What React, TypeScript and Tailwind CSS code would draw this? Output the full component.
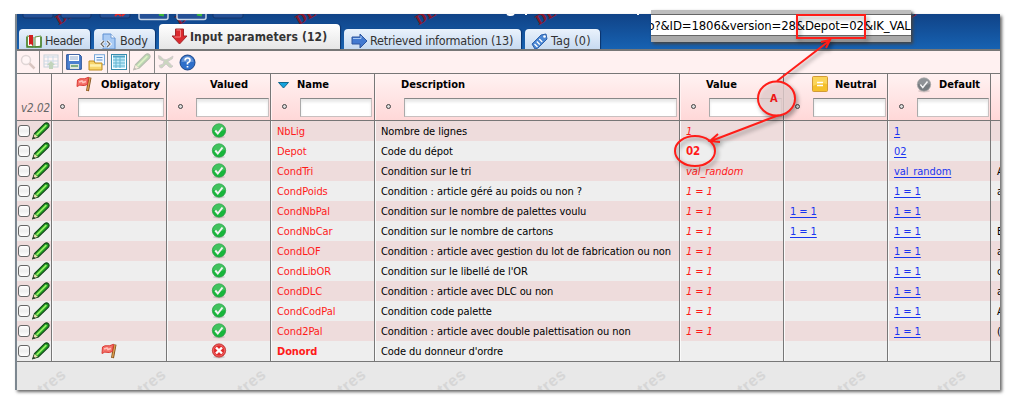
import React from "react";

type Row = { name: string; desc: string; value: string; neutral?: string; def?: string; extra?: string; bold?: boolean };

const rows: Row[] = [
  { name: "NbLig", desc: "Nombre de lignes", value: "1", def: "1" },
  { name: "Depot", desc: "Code du dépot", value: "02", def: "02" },
  { name: "CondTri", desc: "Condition sur le tri", value: "val_random", def: "val_random", extra: "A" },
  { name: "CondPoids", desc: "Condition : article géré au poids ou non ?", value: "1 = 1", def: "1 = 1", extra: "a" },
  { name: "CondNbPal", desc: "Condition sur le nombre de palettes voulu", value: "1 = 1", neutral: "1 = 1", def: "1 = 1" },
  { name: "CondNbCar", desc: "Condition sur le nombre de cartons", value: "1 = 1", neutral: "1 = 1", def: "1 = 1", extra: "E" },
  { name: "CondLOF", desc: "Condition : article avec gestion du lot de fabrication ou non", value: "1 = 1", def: "1 = 1", extra: "a" },
  { name: "CondLibOR", desc: "Condition sur le libellé de l'OR", value: "1 = 1", def: "1 = 1", extra: "c" },
  { name: "CondDLC", desc: "Condition : article avec DLC ou non", value: "1 = 1", def: "1 = 1", extra: "a" },
  { name: "CondCodPal", desc: "Condition code palette", value: "1 = 1", def: "1 = 1", extra: "A" },
  { name: "Cond2Pal", desc: "Condition : article avec double palettisation ou non", value: "1 = 1", def: "1 = 1", extra: "(" },
  { name: "Donord", desc: "Code du donneur d'ordre", value: "", bold: true },
];

const grid = "grid grid-cols-[35px_115px_104px_104px_305px_104px_104px_103px_9px]";
const cell = "border-r border-[#777] shadow-[inset_1px_0_0_#fafafa] flex items-center overflow-hidden whitespace-nowrap";
const textCell = cell + " pl-[6px] pt-[2px] tracking-[-0.075px]";

function Check({ gray }: { gray?: boolean }) {
  return (
    <svg width="16" height="16" viewBox="0 0 16 16" className="shrink-0">
      <ellipse cx="8" cy="14" rx="6" ry="1.5" fill="#0002" />
      <circle cx="8" cy="7.5" r="6.7" fill={gray ? "#777c80" : "#18b63b"} stroke={gray ? "#aaa" : "#2d9b45"} strokeWidth=".7" />
      <path d="M2 7a6 6 0 0 1 12 0q-6 2-12 0" fill="#fff" opacity=".18" />
      <path d="M4.300 7.500l2.500 3L11.500 4.500" fill="none" stroke="#f4f4f4" strokeWidth={gray ? "1.500" : "2"} />
    </svg>
  );
}

function Cross() {
  return (
    <svg width="16" height="16" viewBox="0 0 16 16" className="shrink-0">
      <ellipse cx="8" cy="14" rx="6" ry="1.5" fill="#0002" />
      <circle cx="8" cy="7.5" r="6.7" fill="#e02b2b" stroke="#b33" strokeWidth=".7" />
      <circle cx="8" cy="7.5" r="5.6" fill="none" stroke="#f59090" strokeWidth=".6" />
      <path d="M5 4.5l6 6M11 4.5l-6 6" stroke="#fff" strokeWidth="2.4" />
    </svg>
  );
}

function Flag() {
  return (
    <svg width="16" height="16" viewBox="0 0 16 16" className="shrink-0">
      <path d="M14 1.500l-2.500 13.500" stroke="#7b4a17" strokeWidth="3" />
      <path d="M14 2l-2.500 12.500" stroke="#dc9d50" strokeWidth="1.4" />
      <path d="M1.500 4Q4 2.200 6 2.800T12.500 1.300L11.300 8.500Q8 10.200 6 9.300T1 10.500z" fill="#f4716a" stroke="#dc3a33" />
      <path d="M3 6l3-1 1 1.500 3-1" stroke="#ffc2bb" strokeWidth="1.600" fill="none" />
    </svg>
  );
}

function Pencil({ faded }: { faded?: boolean }) {
  return (
    <svg width="18" height="18" viewBox="0 0 18 18" className={faded ? "shrink-0 opacity-30" : "shrink-0"}>
      <path d="M.700 16.800L2.500 11.500 12.500 1.700q2.200-1.700 3.800 0t0 3.600L6.300 15z" fill="#1e9d22" stroke="#15461a" strokeWidth="1.100" />
      <path d="M4.600 12.800L14.400 3.200" stroke="#9af066" strokeWidth="1.800" />
      <path d="M1 16.500l1.700-4.500 3.100 2.800z" fill="#e8dcae" />
      <path d="M.700 16.800l.900-2.400 1.600 1.500z" fill="#222" />
    </svg>
  );
}

function Head({ label, icon, textPad, bullet, input }: { label: string; icon?: React.ReactNode; textPad: string; bullet: string; input: string }) {
  return (
    <div className="flex h-[46px] flex-col overflow-hidden border-r border-[#777] shadow-[inset_1px_0_0_#fff2f2]">
      <div className={"flex h-6 items-start whitespace-nowrap pt-[2px] font-bold " + textPad}>
        {icon}
        <span className="leading-[18px]">{label}</span>
      </div>
      <div className={"flex items-start " + bullet}>
        <span className="mt-[6px] h-[5px] w-[5px] shrink-0 rounded-full border-[1.500px] border-[#444] bg-[#ddd]" />
        <span className={"ml-[13px] h-[19px] border border-[#c9c0c0] border-t-[#888] border-l-[#aaa] bg-white shadow-[inset_0_3px_3px_#e8e8e8] " + input} />
      </div>
    </div>
  );
}

function Tab({ children, active, size }: { children: React.ReactNode; active?: boolean; size: string }) {
  return (
    <div className={"mr-1 flex items-center whitespace-nowrap rounded-t-[4px] text-[#333] shadow-[1px_0_1px_#0b326a] " + size + (active ? " h-[25px] bg-linear-to-b from-white to-[#e6e6e6] text-[12px] font-bold tracking-[0.1px]" : " h-5 bg-linear-to-b from-[#eaf2fc] to-[#c7daf0] pt-[4px] text-[12.5px]")}>
      {children}
    </div>
  );
}

const stamps = ["left-[43px]", "left-[163px]", "left-[283px]", "left-[403px]", "left-[523px]", "left-[883px]"];
const watermarks = ["left-[19px]", "left-[119px]", "left-[219px]", "left-[319px]", "left-[419px]", "left-[519px]", "left-[619px]", "left-[719px]", "left-[819px]", "left-[919px]"];

export default function App() {
  return (
    <div className="relative h-[413px] w-[1013px] overflow-hidden bg-white pl-[15px] pt-[14px] font-['DejaVu_Sans_Condensed','DejaVu_Sans',sans-serif] text-[11px] text-black">
      <div className="flex h-[376px] w-[985px] flex-col border-l-2 border-[#7c8790] bg-[#e8e8e8] shadow-[2px_2px_3px_#666]">
        <div className="relative h-[35px] shrink-0 overflow-hidden bg-linear-to-b from-[#104387] to-[#1762b2]">
          {stamps.map((s) => (
            <span key={s} className={"absolute -top-px origin-bottom-left -rotate-[30deg] font-['DejaVu_Serif',serif] text-[13px] font-bold leading-[15px] text-[#85182c] " + s}>DEMO</span>
          ))}
          <svg className="absolute left-0 top-0" width="640" height="8" viewBox="0 0 640 8">
            <g fill="#255196" stroke="#15356a">
              <rect x="6" y="-8" width="30" height="12" rx="2" /><rect x="44" y="-8" width="30" height="12" rx="2" /><rect x="83" y="-8" width="30" height="12" rx="2" />
              <rect x="196" y="-8" width="30" height="12" rx="2" />
            </g>
            <g fill="#255196" stroke="#c8d5e6" strokeWidth="1.500"><rect x="122" y="-8" width="29" height="13.500" rx="2" /><rect x="160" y="-8" width="29" height="13.500" rx="2" /></g>
            <path d="M98 2l3-3 3 3m1 0l3-3" stroke="#e02828" strokeWidth="2" fill="none" /><path d="M142 0l5 1M180 0l5 1" stroke="#3cb83d" strokeWidth="3" />
            <path d="M490 0q4 2 7 0M509 0v1M621 0v1" stroke="#fff" strokeWidth="2" fill="none" />
          </svg>
          <div className="relative flex h-[35px] items-end pl-[2px]">
            <Tab size="w-[71px] tracking-[-0.4px]">
              <svg width="16" height="14" viewBox="0 0 16 14" className="ml-[7px] mr-[3px]"><path d="M1 2v10l6 1V3z" fill="#fff" stroke="#65923f" /><path d="M15 2v10l-6 1V3z" fill="#fff" stroke="#65923f" /><path d="M3 1h4v11l-2-2-2 1z" fill="#d21f1f" /><path d="M1 3v10h14V3" fill="none" stroke="#47832b" strokeWidth="1.500" /></svg>
              Header
            </Tab>
            <Tab size="w-[61px] tracking-[-0.2px]">
              <svg width="16" height="17" viewBox="0 0 16 17" className="ml-[6px] mr-1"><path d="M3 1h8l4 4v11H3z" fill="#a9cbf4" stroke="#5f90d2" /><path d="M11 1v4h4" fill="#fff" stroke="#6e9bd5" /><path d="M4 8l-3 3 3 3m3-6l3 3-3 3" fill="none" stroke="#fff" strokeWidth="3" /><path d="M4 8l-3 3 3 3m3-6l3 3-3 3" fill="none" stroke="#666" strokeWidth="1.200" /></svg>
              Body
            </Tab>
            <Tab active size="w-[181px]">
              <svg width="17" height="17" viewBox="0 0 17 17" className="ml-[12px] mr-[2px]"><path d="M4.500 1h8v7h3.500l-7.500 8L1 8h3.500z" fill="#db2a2e" stroke="#a3282c" /><path d="M5.500 2h4v7H3.500" fill="none" stroke="#f58282" /></svg>
              Input parameters (12)
            </Tab>
            <Tab size="w-[177px] tracking-[-0.23px]">
              <svg width="17" height="16" viewBox="0 0 17 16" className="ml-[7px] mr-[2px]"><path d="M1 4h8V1l7 7-7 7v-4H1z" fill="#4279d0" stroke="#2d559e" /><path d="M2 5.500h8V3" fill="none" stroke="#a6c8f5" /></svg>
              Retrieved information (13)
            </Tab>
            <Tab size="w-[75px] tracking-[0.2px]">
              <svg width="17" height="17" viewBox="0 0 17 17" className="ml-[6px] mr-[3px]"><path d="M1 11L10 2l5-1 1 5-9 9-3 1z" fill="#4a86d3" stroke="#2d62ad" /><path d="M3.500 11l3 3m-.700-5.500l3 3m-.500-5.500l3 3" stroke="#fff" strokeWidth="1.300" /><circle cx="13.500" cy="3.500" r="1.300" fill="#fff" /></svg>
              Tag (0)
            </Tab>
          </div>
        </div>

        <div className="flex h-[25px] shrink-0 items-center border-b border-t-2 border-[#777] bg-[#fff1f1]">
          <div className="flex h-full w-[23px] items-center justify-center border-r border-[#888]">
            <svg width="16" height="16" viewBox="0 0 16 16" opacity=".3"><circle cx="6" cy="6" r="4.500" fill="#fff" stroke="#999" strokeWidth="1.500" /><path d="M9.500 9.500l5 5" stroke="#865" strokeWidth="2.500" /></svg>
          </div>
          <div className="flex h-full w-[23px] items-center justify-center border-r border-[#888]">
            <svg width="16" height="16" viewBox="0 0 16 16" opacity=".3"><rect x="1" y="1" width="14" height="12" fill="#fff" stroke="#4689a8" /><path d="M1 3h14M5 2v11M10 2v11M1 7h14M1 10h14" stroke="#56a6d0" /><path d="M6 15h4v-4h2L8 7l-4 4h2z" fill="#3a9545" /></svg>
          </div>
          <div className="flex h-full w-[45px] items-center gap-[6px] border-r border-[#888] pl-[3px]">
            <svg width="16" height="16" viewBox="0 0 16 16"><path d="M.7.700h13l1.600 1.600v13H.7z" fill="#4c80d0" stroke="#244d94" /><path d="M3 1h10v6H3z" fill="#fff" /><path d="M4 3h8M4 5h8" stroke="#90a8cf" /><rect x="4" y="10" width="9" height="5" fill="#dfe8dc" /><path d="M5 12h7" stroke="#4d8e53" strokeWidth="1.300" /></svg>
            <svg width="17" height="17" viewBox="0 0 17 17"><rect x="6.500" y=".700" width="10" height="10" fill="#f2f7ff" stroke="#7ba8d9" /><path d="M8.500 3.500h6M8.500 6h6" stroke="#5b8ecb" /><path d="M1 7h5l1 2h7v7H1z" fill="#f8d56a" stroke="#c08c20" /><path d="M2 11.500h11" stroke="#fff1ae" strokeWidth="2.500" /></svg>
          </div>
          <div className="flex h-full w-[22px] items-center justify-center border-r border-[#888]">
            <svg width="16" height="16" viewBox="0 0 16 16"><rect x=".500" y=".500" width="15" height="15" fill="#fff" stroke="#388cad" /><rect x="2" y="2" width="12" height="12" fill="#bde9f8" /><path d="M2 2.500h12" stroke="#4fa4c7" strokeWidth="2" /><path d="M5 3v11M9 3v11M2 6h12M2 9h12M2 12h12" stroke="#66b5d1" /></svg>
          </div>
          <div className="flex h-full w-[25px] items-center justify-center border-r border-[#888]"><Pencil faded /></div>
          <div className="flex items-center gap-[5px] pl-[2px]">
            <svg width="17" height="16" viewBox="0 0 17 16" opacity=".3"><path d="M1.500 1.500q-.5 4 2.500 4.500l3 1-1 3-4 1.500q.5 3 3 2.500l4-4 3 3q3 1.500 4-1-2-.500-2.500-2L11 7.500l3-2q2 0 2-3.500l-4 2.500-3 1.200L6 5Q4.500 2 1.500 1.500z" fill="#5a9a52" stroke="#667" strokeWidth=".8" /></svg>
            <svg width="17" height="17" viewBox="0 0 17 17"><circle cx="8.500" cy="8.500" r="7.500" fill="#2f6fca" stroke="#1d4688" /><path d="M2.500 8a6 6 0 0 1 12 0z" fill="#fff" opacity=".25" /><path d="M6 6.500Q6.200 4 8.600 4T11 6.500Q11 8 8.500 9v1.500M8.500 12v1.600" stroke="#fff" strokeWidth="1.700" fill="none" /></svg>
          </div>
        </div>

        <div className={grid + " h-[47px] shrink-0 border-b border-[#777] bg-linear-to-b from-[#fff2f2] to-[#ffd8d8]"}>
          <div className="flex h-[46px] items-end border-r border-[#777] pb-[5px] pl-1 text-[11.500px] italic leading-[14px] text-[#666]">v2.02</div>
          <Head label="Obligatory" textPad="pl-[24px]" bullet="pl-[8px]" input="w-[86px]" icon={<span className="mr-[9px]"><Flag /></span>} />
          <Head label="Valued" textPad="pl-[43px]" bullet="pl-[11px]" input="w-[73px]" />
          <Head label="Name" textPad="pl-[7px]" bullet="pl-[11px]" input="w-[72px]" icon={<svg width="11" height="7" viewBox="0 0 11 7" className="mr-[8px] mt-[6px]"><path d="M.5.500h10L5.500 6z" fill="#16a2dd" stroke="#11698f" /></svg>} />
          <Head label="Description" textPad="pl-[26px]" bullet="pl-[11px]" input="w-[273px]" />
          <Head label="Value" textPad="pl-[26px]" bullet="pl-[11px]" input="w-[73px]" />
          <Head label="Neutral" textPad="pl-[28px]" bullet="pl-[11px]" input="w-[73px]" icon={<svg width="16" height="16" viewBox="0 0 16 16" className="mr-[7px]"><rect x=".500" y=".500" width="15" height="15" rx="1" fill="#f5c02c" stroke="#d29b37" /><path d="M1 1h14v7Q8 6 1 10z" fill="#ffe27a" opacity=".6" /><path d="M5 6.500h6M5 9.500h6" stroke="#fff" strokeWidth="1.700" /></svg>} />
          <Head label="Default" textPad="pl-[28px]" bullet="pl-[11px]" input="w-[72px]" icon={<span className="mr-[7px] mt-[1px]"><Check gray /></span>} />
          <div />
        </div>

        <div className="shrink-0 border-b border-[#777]">
          {rows.map((r, i) => (
            <div key={r.name} className={grid + " h-5 " + (i % 2 ? "bg-[#eee]" : "bg-[#eedcdc]")}>
              <div className="flex items-center border-r border-[#777] pl-[1px]">
                <span className="mr-[2px] h-3 w-3 shrink-0 rounded-[3px] border border-[#666] bg-linear-to-b from-white via-[#eee] to-white" />
                <Pencil />
              </div>
              <div className={cell + " pb-px pl-[49px]"}>{r.bold && <Flag />}</div>
              <div className={cell + " justify-center"}>{r.bold ? <Cross /> : <Check />}</div>
              <div className={textCell + " text-[#ff1a1a] " + (r.bold ? "font-bold" : "")}>{r.name}</div>
              <div className={textCell}>{r.desc}</div>
              <div className={textCell + " text-[#ff1a1a] " + (r.value === "02" ? "text-[11.500px] font-bold" : "italic")}>{r.value}</div>
              <div className={textCell + " text-[#1a35f0] underline underline-offset-2"}>{r.neutral}</div>
              <div className={textCell + " text-[#1a35f0] underline underline-offset-2"}>{r.def}</div>
              <div className="flex items-center overflow-hidden pl-[6px] pt-[2px]">{r.extra}</div>
            </div>
          ))}
        </div>
        <div className="relative grow overflow-hidden">
          {watermarks.map((s) => (
            <span key={s} className={"absolute top-[10px] -rotate-[38deg] font-['Liberation_Sans',sans-serif] text-[16px] font-bold leading-[20px] tracking-[0.5px] text-[#d6d6d6] " + s}>tres</span>
          ))}
        </div>
      </div>

      <div className="absolute left-[651px] top-[10px] flex h-[32px] w-[260px] flex-col border-b-[6px] border-t-4 border-[#a9a9a9] border-t-[#bdbdbd] shadow-[2px_2px_3px_#444]">
        <div className="flex grow items-center overflow-hidden whitespace-nowrap border-y border-[#666] bg-white pt-[2px] text-[13px] tracking-[-0.13px]"><span className="-ml-[3.500px]">o?&amp;ID=1806&amp;version=28&amp;Depot=02&amp;IK_VAL</span></div>
      </div>
      <svg className="absolute left-0 top-0 drop-shadow-[2px_3px_2px_rgba(0,0,0,0.4)]" width="1013" height="413" viewBox="0 0 1013 413" fill="none" stroke="#ff1d18" strokeWidth="2">
        <rect x="797" y="15" width="68" height="23" />
        <path d="M777 81L829 41M821 42l9-2-4 8M779 115L711 141M718 134l-8 7 10 1" />
        <ellipse cx="776.500" cy="98.500" rx="18.500" ry="17" fill="#f5dddd" fillOpacity=".75" />
        <ellipse cx="695" cy="151" rx="20" ry="15" />
      </svg>
      <span className="absolute left-[770px] top-[91px] text-[11px] font-bold text-[#ed1515]">A</span>
    </div>
  );
}
